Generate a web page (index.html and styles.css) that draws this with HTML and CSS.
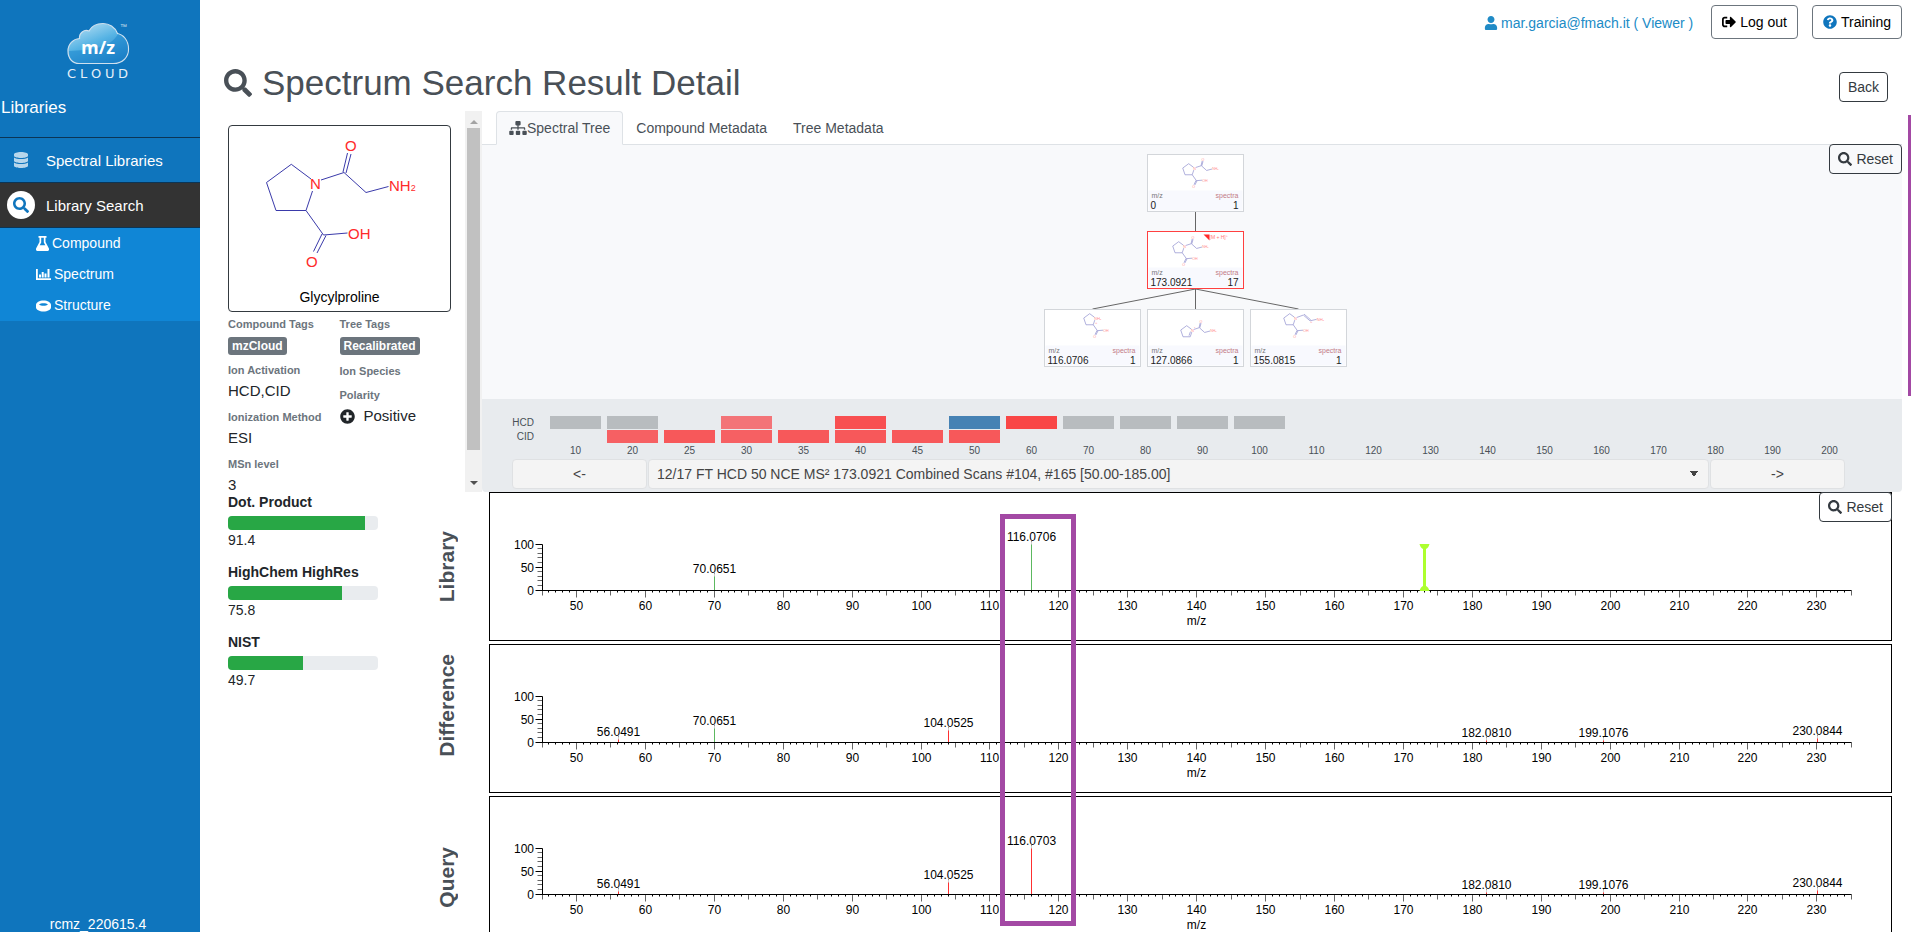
FILE: index.html
```html
<!DOCTYPE html>
<html lang="en">
<head>
<meta charset="utf-8">
<title>mzCloud - Spectrum Search Result Detail</title>
<link rel="stylesheet" href="styles.css">
</head>
<body>
<svg class="defs" aria-hidden="true">
  <defs>
    <symbol id="i-search" viewBox="0 0 512 512"><path d="M505 442.7L405.3 343c-4.5-4.5-10.6-7-17-7H372c27.6-35.3 44-79.7 44-128C416 93.1 322.9 0 208 0S0 93.1 0 208s93.1 208 208 208c48.3 0 92.7-16.4 128-44v16.3c0 6.4 2.5 12.5 7 17l99.7 99.7c9.4 9.4 24.6 9.4 33.9 0l28.3-28.3c9.4-9.4 9.4-24.6.1-34zM208 336c-70.7 0-128-57.2-128-128 0-70.7 57.2-128 128-128 70.7 0 128 57.2 128 128 0 70.7-57.2 128-128 128z"/></symbol>
    <symbol id="i-user" viewBox="0 0 448 512"><path d="M224 256c70.7 0 128-57.3 128-128S294.7 0 224 0 96 57.3 96 128s57.3 128 128 128zm89.6 32h-16.7c-22.2 10.2-46.9 16-72.9 16s-50.6-5.8-72.9-16h-16.7C60.2 288 0 348.2 0 422.4V464c0 26.5 21.5 48 48 48h352c26.5 0 48-21.5 48-48v-41.6c0-74.2-60.2-134.4-134.4-134.4z"/></symbol>
    <symbol id="i-out" viewBox="0 0 512 512"><path d="M497 273L329 441c-15 15-41 4.5-41-17v-96H152c-13.3 0-24-10.7-24-24v-96c0-13.3 10.7-24 24-24h136V88c0-21.4 25.9-32 41-17l168 168c9.3 9.4 9.3 24.6 0 34zM192 436v-40c0-6.6-5.4-12-12-12H96c-17.7 0-32-14.3-32-32V160c0-17.7 14.3-32 32-32h84c6.6 0 12-5.4 12-12V76c0-6.6-5.4-12-12-12H96c-53 0-96 43-96 96v192c0 53 43 96 96 96h84c6.6 0 12-5.4 12-12z"/></symbol>
    <symbol id="i-help" viewBox="0 0 512 512"><path d="M504 256c0 136.997-111.043 248-248 248S8 392.997 8 256C8 119.083 119.043 8 256 8s248 111.083 248 248zM262.655 90c-54.497 0-89.255 22.957-116.549 63.758-3.536 5.286-2.353 12.415 2.715 16.258l34.699 26.31c5.205 3.947 12.621 3.008 16.665-2.122 17.864-22.658 30.113-35.797 57.303-35.797 20.429 0 45.698 13.148 45.698 32.958 0 14.976-12.363 22.667-32.534 33.976C247.128 238.528 216 254.941 216 296v4c0 6.627 5.373 12 12 12h56c6.627 0 12-5.373 12-12v-1.333c0-28.462 83.186-29.647 83.186-106.667 0-58.002-60.165-102-116.531-102zM256 338c-25.365 0-46 20.635-46 46 0 25.364 20.635 46 46 46s46-20.636 46-46c0-25.365-20.635-46-46-46z"/></symbol>
    <symbol id="i-db" viewBox="0 0 448 512"><path d="M448 73.143v45.714C448 159.143 347.667 192 224 192S0 159.143 0 118.857V73.143C0 32.857 100.333 0 224 0s224 32.857 224 73.143zM448 176v102.857C448 319.143 347.667 352 224 352S0 319.143 0 278.857V176c48.125 33.143 136.208 48.572 224 48.572S399.874 209.143 448 176zm0 160v102.857C448 479.143 347.667 512 224 512S0 479.143 0 438.857V336c48.125 33.143 136.208 48.572 224 48.572S399.874 369.143 448 336z"/></symbol>
    <symbol id="i-plus" viewBox="0 0 512 512"><path d="M256 8C119 8 8 119 8 256s111 248 248 248 248-111 248-248S393 8 256 8zm144 276c0 6.600-5.400 12-12 12h-92v92c0 6.600-5.400 12-12 12h-56c-6.600 0-12-5.400-12-12v-92h-92c-6.600 0-12-5.400-12-12v-56c0-6.600 5.400-12 12-12h92v-92c0-6.600 5.400-12 12-12h56c6.600 0 12 5.400 12 12v92h92c6.600 0 12 5.400 12 12v56z"/></symbol>
    <symbol id="i-sitemap" viewBox="0 0 640 512"><path d="M128 352H32c-17.67 0-32 14.33-32 32v96c0 17.67 14.33 32 32 32h96c17.67 0 32-14.33 32-32v-96c0-17.67-14.33-32-32-32zm-24-80h192v48h48v-48h192v48h48v-57.59c0-21.17-17.23-38.41-38.41-38.41H344v-64h40c17.67 0 32-14.33 32-32V32c0-17.67-14.33-32-32-32H256c-17.67 0-32 14.33-32 32v96c0 17.67 14.33 32 32 32h40v64H94.41C73.23 224 56 241.23 56 262.410V320h48v-48zm264 80h-96c-17.67 0-32 14.33-32 32v96c0 17.67 14.33 32 32 32h96c17.67 0 32-14.33 32-32v-96c0-17.67-14.33-32-32-32zm240 0h-96c-17.67 0-32 14.33-32 32v96c0 17.67 14.33 32 32 32h96c17.67 0 32-14.33 32-32v-96c0-17.67-14.33-32-32-32z"/></symbol>
    <symbol id="i-flask" viewBox="0 0 13 15"><path fill-rule="evenodd" d="M2.500 0h8v1.700h-1V6l3.300 6.300c.7 1.400-.1 2.700-1.600 2.700H1.800C.3 15-.5 13.700.2 12.300L3.500 6V1.700h-1zM5.200 1.700v4.700L3.700 9.300h5.600L7.800 6.400V1.700z"/></symbol>
    <symbol id="i-chart" viewBox="0 0 15 12"><path d="M0 0h1.800v9.200H15V11H0zM3 5.500h2v3H3zM5.700 3h2v5.500h-2zM8.500 4.500h2v4h-2zM11.500 0h2v8.500h-2z"/></symbol>
    <symbol id="i-coin" viewBox="0 0 15 12"><path fill-rule="evenodd" d="M7.500.5C11.600.5 15 2.300 15 5v2.500c0 2.300-3.400 4-7.500 4S0 9.800 0 7.500V5C0 2.300 3.400.5 7.500.5zM3 4.500c1 .9 2.600 1.200 4.500 1.200s3.500-.3 4.500-1.200c-.9-.9-2.600-1.300-4.500-1.300S3.900 3.600 3 4.500z"/></symbol>
    <linearGradient id="cloud" x1="0.2" y1="0" x2="0.800" y2="1">
      <stop offset="0" stop-color="#b5def3"/><stop offset="0.45" stop-color="#55b3e4"/><stop offset="1" stop-color="#1773bd"/>
    </linearGradient>
    <g id="ring"><path d="M83 53L63.300 38.300L38.500 56.500L48 84.500H78L84.500 65"/><text x="82" y="63">N</text></g>
    <g id="glycyl"><path d="M93 54L116 46.500L138 66.500L160.500 60.500M115 46L119.500 27M118 47L123 28"/><text x="117" y="25">O</text><text x="161" y="65">NH<tspan class="sub">2</tspan></text></g>
    <g id="acid"><path d="M78 84.500L95.500 109L119.500 107M94 108L85.500 125.500M98 109.500L89 127"/><text x="78" y="141">O</text><text x="120" y="113">OH</text></g>
  </defs>
</svg>

<div class="app">
  <nav class="sidebar" aria-label="Main">
    <div class="brand">
      <svg class="logo" viewBox="66 20 66 62" role="img" aria-label="m/z Cloud">
        <path d="M79 63.500H113C123 63.500 128.500 57 128.500 49C128.500 40 123 34.500 117.500 33.500C115 27 109 23.500 103 23.500C96 23.500 91 27 89 31C84 29 79 33 79.500 38.500C73 39 68 44 68 51C68 59 73 63.500 79 63.500Z" fill="url(#cloud)" stroke="#cfe0ee" stroke-width="1.200"/>
        <path d="M79 63H113C122 63 128 57 128 49C128 42 124 36 118 34C110 48 92 50 69 51C69 58 73 63 79 63Z" fill="#1b86cd" opacity=".55"/>
        <text x="98" y="54" class="logo-mz">m/z</text>
        <text y="78" x="67 80 91 105 118" class="logo-word">CLOUD</text>
        <text x="120" y="29" class="logo-tm">™</text>
      </svg>
    </div>
    <h2 class="side-title">Libraries</h2>
    <a href="#" class="side-item"><span class="side-icon"><svg class="ic16 faded"><use href="#i-db"/></svg></span>Spectral Libraries</a>
    <a href="#" class="side-item active"><span class="side-icon round"><svg class="ic16"><use href="#i-search"/></svg></span>Library Search</a>
    <div class="submenu">
      <a href="#"><svg class="ic-flask"><use href="#i-flask"/></svg>Compound</a>
      <a href="#"><svg class="ic-sub"><use href="#i-chart"/></svg>Spectrum</a>
      <a href="#"><svg class="ic-sub"><use href="#i-coin"/></svg>Structure</a>
    </div>
    <div class="version">rcmz_220615.4</div>
  </nav>

  <main class="main">
    <header class="topbar">
      <a href="#" class="user"><svg class="ic14"><use href="#i-user"/></svg>mar.garcia@fmach.it ( Viewer )</a>
      <button class="btn tall"><svg class="ic14"><use href="#i-out"/></svg>Log out</button>
      <button class="btn tall"><svg class="ic14 blue"><use href="#i-help"/></svg>Training</button>
    </header>
    <div class="title-row">
      <h1><svg class="ic28"><use href="#i-search"/></svg>Spectrum Search Result Detail</h1>
      <button class="btn">Back</button>
    </div>

    <div class="upper">
      <aside class="info">
        <div class="info-body">
          <figure class="card">
            <svg class="molecule" viewBox="1 0 221 138" role="img" aria-label="Glycylproline structure">
              <use href="#ring"/><use href="#glycyl"/><use href="#acid"/>
            </svg>
            <figcaption>Glycylproline</figcaption>
          </figure>
          <div class="facts">
            <dl>
              <div class="tagged"><dt>Compound Tags</dt><dd><span class="badge">mzCloud</span></dd></div>
              <div><dt>Ion Activation</dt><dd>HCD,CID</dd></div>
              <div><dt>Ionization Method</dt><dd>ESI</dd></div>
              <div><dt>MSn level</dt><dd>3</dd></div>
            </dl>
            <dl class="second">
              <div class="tagged"><dt>Tree Tags</dt><dd><span class="badge">Recalibrated</span></dd></div>
              <div><dt>Ion Species</dt></div>
              <div><dt>Polarity</dt><dd class="polarity"><svg class="ic15"><use href="#i-plus"/></svg>Positive</dd></div>
            </dl>
          </div>
        </div>
        <div class="scroll" aria-hidden="true"><span class="arrow up"></span><span class="thumb"></span><span class="arrow down"></span></div>
      </aside>

      <section class="tree-panel">
        <div class="tabs">
          <a href="#" class="tab current"><svg class="ic-tree"><use href="#i-sitemap"/></svg>Spectral Tree</a>
          <a href="#" class="tab">Compound Metadata</a>
          <a href="#" class="tab">Tree Metadata</a>
        </div>
        <div class="tree">
          <button class="btn reset"><svg class="ic14"><use href="#i-search"/></svg>Reset</button>
          <svg class="tree-svg" viewBox="0 0 1420 254" role="img" aria-label="Spectral tree">
            <path class="link" d="M713.500 67V86M713.500 144V164M713.500 144L610.500 164M713.500 144L816.500 164"/>
            <g class="node" transform="translate(665.500 9.500)">
              <rect class="box" width="96" height="57"/><rect class="foot" x="1" y="36" width="94" height="20"/>
              <g class="mini" transform="translate(26 0) scale(.24)"><use href="#ring"/><use href="#glycyl"/><use href="#acid"/></g>
              <text class="cap" x="4" y="43">m/z</text><text class="val" x="3" y="54">0</text>
              <text class="cap rose" x="91" y="43">spectra</text><text class="val end" x="91" y="54">1</text>
            </g>
            <g class="node chosen" transform="translate(665.500 86.500)">
              <rect class="box" width="96" height="57"/><rect class="foot" x="1" y="36" width="94" height="20"/>
              <g class="mini" transform="translate(16 1) scale(.24)"><use href="#ring"/><use href="#glycyl"/><use href="#acid"/></g>
              <path d="M56 3h6v6z" fill="#ff2a2a"/><text class="ion" x="62" y="7">[M + H]⁺</text>
              <text class="cap" x="4" y="43">m/z</text><text class="val" x="3" y="54">173.0921</text>
              <text class="cap rose" x="91" y="43">spectra</text><text class="val end" x="91" y="54">17</text>
            </g>
            <g class="node" transform="translate(562.500 164.500)">
              <rect class="box" width="96" height="57"/><rect class="foot" x="1" y="36" width="94" height="20"/>
              <g class="mini" transform="translate(30 -5) scale(.24)"><use href="#ring"/><text x="94" y="63">H<tspan class="sub">2</tspan></text><text x="85" y="82">+</text><use href="#acid"/></g>
              <text class="cap" x="4" y="43">m/z</text><text class="val" x="3" y="54">116.0706</text>
              <text class="cap rose" x="91" y="43">spectra</text><text class="val end" x="91" y="54">1</text>
            </g>
            <g class="node" transform="translate(665.500 164.500)">
              <rect class="box" width="96" height="57"/><rect class="foot" x="1" y="36" width="94" height="20"/>
              <g class="mini" transform="translate(24 7) scale(.24)"><use href="#ring"/><use href="#glycyl"/><path d="M73 80L79 63"/><text x="92" y="58">⁺</text></g>
              <text class="cap" x="4" y="43">m/z</text><text class="val" x="3" y="54">127.0866</text>
              <text class="cap rose" x="91" y="43">spectra</text><text class="val end" x="91" y="54">1</text>
            </g>
            <g class="node" transform="translate(768.500 164.500)">
              <rect class="box" width="96" height="57"/><rect class="foot" x="1" y="36" width="94" height="20"/>
              <g class="mini" transform="translate(24 -5) scale(.24)"><use href="#ring"/><use href="#acid"/><path d="M93 54L120 44L148 68L175 62M123 40L151 64"/><text x="148" y="75">+</text><text x="176" y="67">NH<tspan class="sub">2</tspan></text></g>
              <text class="cap" x="4" y="43">m/z</text><text class="val" x="3" y="54">155.0815</text>
              <text class="cap rose" x="91" y="43">spectra</text><text class="val end" x="91" y="54">1</text>
            </g>
          </svg>
        </div>
        <div class="energy">
          <div class="energy-grid" id="energy"></div>
          <div class="picker">
            <button class="step" aria-label="Previous spectrum">&lt;-</button>
            <select class="scan" aria-label="Spectrum">
              <option>12/17 FT HCD 50 NCE MS² 173.0921 Combined Scans #104, #165 [50.00-185.00]</option>
            </select>
            <button class="step" aria-label="Next spectrum">-&gt;</button>
          </div>
        </div>
      </section>
    </div>

    <div class="lower">
      <section class="scores" aria-label="Match scores">
        <div class="score"><h3>Dot. Product</h3><div class="bar"><div class="fill" style="width:91.4%"></div></div><p>91.4</p></div>
        <div class="score"><h3>HighChem HighRes</h3><div class="bar"><div class="fill" style="width:75.8%"></div></div><p>75.8</p></div>
        <div class="score"><h3>NIST</h3><div class="bar"><div class="fill" style="width:49.7%"></div></div><p>49.7</p></div>
      </section>
      <section class="spectra">
        <div class="spectrum"><h3>Library</h3><div class="plot" data-plot="library"><button class="btn reset"><svg class="ic14"><use href="#i-search"/></svg>Reset</button></div></div>
        <div class="spectrum"><h3 class="raised">Difference</h3><div class="plot" data-plot="difference"></div></div>
        <div class="spectrum"><h3 class="lowered">Query</h3><div class="plot" data-plot="query"></div></div>
        <div class="marker" aria-hidden="true"></div>
      </section>
    </div>
  </main>
  <div class="edge-marker" aria-hidden="true"></div>
</div>
<script src="app.js"></script>
</body>
</html>
```

FILE: styles.css
```css
* { box-sizing: border-box; }
body { margin: 0; font: 14px/21px "Liberation Sans", Arial, sans-serif; color: #212529; background: #fff; }
h1, h2, h3, p, dl, dd, figure { margin: 0; }
a { color: inherit; text-decoration: none; }
button, select { font: inherit; }
.defs { position: absolute; width: 0; height: 0; }
svg { fill: currentColor; }
.ic14 { width: 14px; height: 14px; }
.ic15 { width: 15px; height: 15px; }
.ic16 { width: 16px; height: 16px; }
.ic28 { width: 28px; height: 28px; }
.ic-flask { width: 13px; height: 15px; }
.ic-sub { width: 15px; height: 12px; }
.ic-tree { width: 18px; height: 14px; }
.blue { color: #0f75bd; }
.faded { opacity: .7; }

.app { position: relative; display: flex; height: 100vh; overflow: hidden; }
.sidebar { display: flex; flex-direction: column; flex: 0 0 200px; background: #0f75bd; color: #fff; }
.brand { display: flex; justify-content: center; padding: 20px 2px 0 0; }
.logo { width: 66px; height: 62px; }
.logo-mz { font: bold 18px "Open Sans", sans-serif; fill: #fff; text-anchor: middle; }
.logo-word { font: 13px "DejaVu Sans", sans-serif; fill: #e6f0f8; }
.logo-tm { font: 7px "Liberation Sans", sans-serif; fill: #cfe0ee; }
.side-title { padding: 16px 1px 19px; font-size: 17px; font-weight: 400; line-height: 20px; }
.side-item { display: flex; align-items: center; gap: 11px; height: 45px; padding-left: 7px; border-top: 1px solid #0b3556; font-size: 15px; }
.side-item.active { height: 46px; background: #333; border-bottom: 1px solid #0b3556; }
.side-icon { display: flex; align-items: center; justify-content: center; width: 28px; height: 28px; }
.side-icon.round { background: #fff; border-radius: 50%; color: #0f75bd; }
.submenu { background: #1086d6; }
.submenu a { display: flex; align-items: center; gap: 3px; height: 31px; padding-left: 36px; }
.version { margin-top: auto; padding: 0 4px 0 0; line-height: 16px; text-align: center; }

.main { flex: 1; min-width: 0; }
.btn { display: inline-flex; align-items: center; justify-content: center; gap: 4px; height: 30px; padding: 0 8px; border: 1px solid #343a40; border-radius: 4px; background: #fff; color: #343a40; }
.btn.tall { height: 34px; padding: 0 10px; border-color: #6c757d; color: #000; }
.topbar { display: flex; align-items: center; justify-content: flex-end; gap: 14px; padding: 5px 9px 0 0; }
.user { display: flex; align-items: center; gap: 3px; padding: 2px 4px 0 0; color: #208bc6; }
.title-row { display: flex; align-items: flex-start; justify-content: space-between; height: 72px; padding: 23px 23px 0 24px; color: #495057; }
.title-row h1 { display: flex; align-items: center; gap: 10px; font-size: 35px; font-weight: 400; line-height: 42px; }
.title-row .btn { margin-top: 10px; }

.upper { display: flex; height: 381px; }
.info { display: flex; flex: 0 0 282px; }
.info-body { flex: 1; overflow: hidden; padding: 14px 14px 0 28px; }
.card { height: 187px; border: 1px solid #343a40; border-radius: 4px; color: #000; text-align: center; }
.card figcaption { padding-top: 23px; line-height: 21px; }
.molecule, .mini { fill: none; stroke: #3a3aaa; }
.molecule { display: block; width: 100%; overflow: visible; }
.molecule text, .mini text, defs text { font-size: 15px; fill: #ff2a2a; stroke: none; }
.sub { font-size: 9px; }
.facts { display: flex; padding-top: 3px; }
.facts dl { display: flex; flex-direction: column; gap: 5px; flex: 1; }
.facts .second { gap: 6px; }
.tagged { height: 41px; }
dt { font-size: 11px; font-weight: 700; line-height: 18px; color: #6c757d; white-space: nowrap; }
dd { font-size: 15px; line-height: 24px; }
.badge { display: inline-block; padding: 0 4px; border-radius: 3px; background: #6c757d; color: #fff; font-size: 12px; font-weight: 700; line-height: 18px; }
.polarity { display: flex; align-items: center; gap: 9px; }
.scroll { display: flex; flex-direction: column; align-items: center; width: 17px; background: #f1f1f1; }
.arrow { width: 8px; border: 4px solid transparent; }
.arrow.up { margin: 2px 0 4px; height: 11px; border-top-width: 2px; border-bottom-color: #a3a3a3; border-bottom-width: 4px; }
.arrow.down { margin-top: auto; margin-bottom: 3px; border-top-color: #505050; }
.thumb { width: 13px; height: 322px; background: #c1c1c1; }

.tree-panel { display: flex; flex-direction: column; flex: 1; min-width: 0; margin-right: 9px; color: #495057; }
.tabs { display: flex; height: 34px; padding-left: 14px; border-bottom: 1px solid #dee2e6; }
.tab { display: flex; align-items: center; height: 34px; padding: 0 12px; border: 1px solid transparent; border-radius: 4px 4px 0 0; }
.tab.current { border-color: #dee2e6; border-bottom-color: #f8f9fb; background: #f8f9fb; }
.tree { position: relative; flex: 1; background: #f8f9fb; }
.reset { position: absolute; top: -1px; right: 0; }
.tree .reset { background: #f8f9fb; }
.tree-svg { display: block; width: 100%; height: 254px; }
.link { fill: none; stroke: #666; }
.box { fill: #fff; stroke: #d3d6da; }
.chosen .box { stroke: #ff4040; }
.foot { fill: #f8f9fe; }
.mini { opacity: .55; stroke-width: 3px; }
.mini text { font-size: 17px; }
.cap { font-size: 7px; fill: #777; }
.rose { fill: #c27b86; text-anchor: end; }
.val { font-size: 10px; fill: #222; }
.end { text-anchor: end; }
.ion { font-size: 5px; fill: #f77; }

.energy { height: 93px; padding-top: 17px; background: #e8ebee; border-radius: 0 0 4px 4px; }
.energy-grid { display: grid; grid-template-columns: 65px repeat(23, 1fr); grid-template-rows: 13px 13px 14px; row-gap: 1px; padding-right: 44px; font-size: 10px; line-height: 14px; text-align: center; }
.energy-grid .name { padding-right: 13px; text-align: right; }
.cell { margin: 0 3px; }
.gray { background: #b8bcbf; }
.blue-cell { background: #4682b4; }
.red { background: #f94646; }
.red1 { background: #f84f51; }
.red2 { background: #f7585a; }
.red3 { background: #f66063; }
.red4 { background: #f37478; }
.picker { display: flex; gap: 1px; padding: 1px 57px 0 30px; }
.step { flex: 0 0 135px; height: 30px; padding: 0; border: 1px solid #dfe1e3; border-radius: 4px; background: #f4f4f4; color: #444; }
.scan { flex: 1; min-width: 0; height: 30px; padding: 0 10px 0 8px; border: 1px solid #dfe1e3; border-radius: 4px; color: #444; appearance: none;
  background: conic-gradient(from -34deg at 50% 100%, #444 68deg, transparent 0) right 10px center / 8px 6px no-repeat, #f4f4f4; font-size: 14px; }

.lower { display: flex; }
.scores { flex: 0 0 235px; padding-left: 28px; }
.score { height: 70px; }
.score h3 { margin-bottom: 3px; font-size: 14px; line-height: 21px; }
.bar { width: 150px; height: 14px; border-radius: 4px; background: #e9ecef; overflow: hidden; }
.fill { height: 100%; background: #28a745; }
.spectra { position: relative; display: flex; flex: 1; flex-direction: column; gap: 3px; min-width: 0; padding-right: 19px; }
.spectrum { display: flex; align-items: center; gap: 30px; }
.spectrum h3 { width: 24px; font-size: 21px; line-height: 24px; color: #495057; writing-mode: vertical-rl; transform: rotate(180deg); text-align: center; }
.raised { padding-top: 26px; }
.lowered { padding-bottom: 14px; }
.plot { position: relative; flex: 1; min-width: 0; border: 1px solid #000; }
.plot .reset { right: -1px; }
.plot > svg { display: block; width: 100%; }
.plot text { font-size: 12px; fill: #000; text-anchor: middle; }
.plot .y-label { text-anchor: end; }
.axis { fill: none; stroke: #000; }
.minor { fill: none; stroke: #666; }
.lead { stroke: #999; stroke-dasharray: 2 1; }
.peak-green { stroke: #5cb860; }
.peak-red { stroke: #ff3030; }
.precursor { fill: #adff2f; stroke: none; }
.marker { position: absolute; left: 565px; top: 22px; width: 76px; height: 412px; border: 5px solid #a349a4; }
.edge-marker { position: absolute; right: 0; top: 115px; width: 3px; height: 281px; background: #a349a4; }
```

FILE: app.js
```js
const energies = [10, 20, 25, 30, 35, 40, 45, 50];
for (let e = 60; e <= 200; e += 10) energies.push(e);

const rows = {
  HCD: { 10: 'gray', 20: 'gray', 30: 'red4', 40: 'red1', 50: 'blue-cell', 60: 'red', 70: 'gray', 80: 'gray', 90: 'gray', 100: 'gray' },
  CID: { 20: 'red3', 25: 'red2', 30: 'red3', 35: 'red2', 40: 'red2', 45: 'red2', 50: 'red2' }
};

let grid = '';
for (const [name, cells] of Object.entries(rows)) {
  grid += `<span class="name">${name}</span>`;
  grid += energies.map(e => `<span class="cell ${cells[e] || ''}"></span>`).join('');
}
grid += '<span></span>' + energies.map(e => `<span>${e}</span>`).join('');
document.getElementById('energy').innerHTML = grid;

const impurities = [
  { mz: 56.0491, h: 3, color: 'red' },
  { mz: 104.0525, h: 12, color: 'red' },
  { mz: 182.0810, h: 2, color: 'red' },
  { mz: 199.1076, h: 2, color: 'red' },
  { mz: 230.0844, h: 4, color: 'red' }
];
const plots = {
  library: [{ mz: 70.0651, h: 14, color: 'green' }, { mz: 116.0706, h: 46, color: 'green' }],
  difference: [{ mz: 70.0651, h: 14, color: 'green' }, ...impurities],
  query: [{ mz: 116.0703, h: 46, color: 'red' }, ...impurities]
};

const BASE = 97.5;
const px = mz => 52.5 + (mz - 45) * 6.891;
const snap = v => Math.round(v) - 0.5;

function drawPlot(name, peaks) {
  let axis = `M45.5 ${BASE}H${snap(px(235))}M52.5 ${BASE}V51.5M45.5 51.5H52.5M45.5 74.5H52.5`;
  let minor = '';
  let labels = `<text class="y-label" x="44" y="102">0</text><text class="y-label" x="44" y="79">50</text><text class="y-label" x="44" y="56">100</text>`;
  for (let i = 1; i < 10; i++) if (i !== 5) minor += `M47.5 ${snap(BASE - i * 4.6)}H52`;
  for (let mz = 45; mz <= 235; mz++) {
    const len = mz % 10 === 0 ? 7 : mz % 5 === 0 ? 5 : 2;
    const tick = `M${snap(px(mz))} ${BASE}v${len}`;
    if (mz % 5 === 0) minor += tick; else axis += tick;
    if (mz % 10 === 0) labels += `<text x="${snap(px(mz))}" y="117">${mz}</text>`;
  }
  labels += `<text x="${snap(px(140))}" y="132">m/z</text>`;
  let lines = '';
  for (const p of peaks) {
    const x = snap(px(p.mz));
    lines += `<path class="lead" d="M${x} ${BASE - p.h - 4}V${BASE - p.h}"/>`;
    lines += `<path class="peak-${p.color}" d="M${x} ${BASE - p.h}V${BASE - 0.5}"/>`;
    labels += `<text x="${x}" y="${BASE - p.h - 3.5}">${p.mz.toFixed(4)}</text>`;
  }
  if (name === 'library') {
    const x = snap(px(173.0921));
    lines += `<path class="precursor" d="M${x - 5} 51h10q-1 4-3.500 5v37q2.500 1 3.500 5h-10q1-4 3.500-5v-37q-2.500-1-3.500-5z"/>`;
  }
  return `<svg viewBox="0 0 1401 147" role="img" aria-label="${name} spectrum"><path class="minor" d="${minor}"/><path class="axis" d="${axis}"/>${lines}${labels}</svg>`;
}

document.querySelectorAll('[data-plot]').forEach(el => {
  el.insertAdjacentHTML('afterbegin', drawPlot(el.dataset.plot, plots[el.dataset.plot]));
});
```
